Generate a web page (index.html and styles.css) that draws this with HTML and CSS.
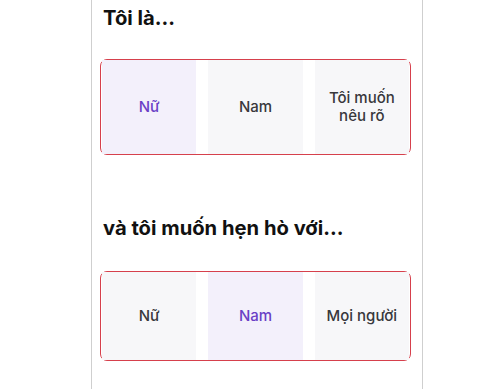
FILE: index.html
```html
<!DOCTYPE html>
<html lang="vi">
<head>
<meta charset="utf-8">
<link rel="stylesheet" href="styles.css">
</head>
<body>
<main class="panel">
  <h2 class="title">Tôi là...</h2>
  <div class="choices">
    <div class="choice selected">Nữ</div>
    <div class="choice">Nam</div>
    <div class="choice">Tôi muốn nêu rõ</div>
  </div>
  <h2 class="title title-second">và tôi muốn hẹn hò với...</h2>
  <div class="choices">
    <div class="choice">Nữ</div>
    <div class="choice selected">Nam</div>
    <div class="choice">Mọi người</div>
  </div>
</main>
</body>
</html>
```
FILE: styles.css
```css
html, body {
  margin: 0;
  padding: 0;
  background: #ffffff;
}
body {
  font-family: Inter, "Noto Sans", "Liberation Sans", sans-serif;
  height: 389px;
  overflow: hidden;
}
.panel {
  box-sizing: border-box;
  margin-left: 91px;
  width: 332px;
  height: 389px;
  border-left: 1px solid #cfcfcf;
  border-right: 1px solid #cfcfcf;
  padding: 4px 11px 0 8px;
}
.title {
  margin: 0 0 0 3px;
  font-size: 20.2px;
  line-height: 28px;
  font-weight: 700;
  color: #111111;
}
.title-second {
  margin-top: 59px;
}
.choices {
  margin-top: 27px;
  border: 1px solid #d6404c;
  border-radius: 7px;
  padding: 0 1px;
  display: grid;
  grid-template-columns: repeat(3, 1fr);
  column-gap: 12px;
}
.title-second + .choices {
  margin-top: 29px;
}
.choice {
  box-sizing: border-box;
  min-height: 88px;
  padding: 29px 6px;
  display: flex;
  align-items: center;
  justify-content: center;
  text-align: center;
  background: #f7f7f9;
  color: #38383c;
  font-size: 15px;
  line-height: 18px;
  font-weight: 500;
}
.choice.selected {
  background: #f3f0fb;
  color: #6a3fc6;
}
```
